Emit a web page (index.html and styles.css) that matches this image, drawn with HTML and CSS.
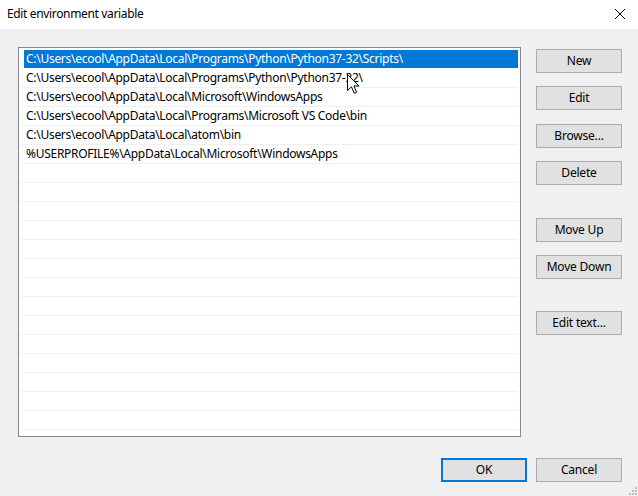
FILE: index.html
```html
<!DOCTYPE html>
<html>
<head>
<meta charset="utf-8">
<link rel="stylesheet" href="styles.css">
</head>
<body>
<div class="dialog">
  <div class="titlebar">
    <span class="title">Edit environment variable</span>
    <svg class="close" width="12" height="12" viewBox="0 0 12 12"><path d="M1 1 L11 11 M11 1 L1 11" stroke="#000" stroke-width="1" fill="none"/></svg>
  </div>
  <div class="main">
    <div class="list">
      <div class="row selected"><span>C:\Users\ecool\AppData\Local\Programs\Python\Python37-32\Scripts\</span></div>
      <div class="row"><span>C:\Users\ecool\AppData\Local\Programs\Python\Python37-32\</span></div>
      <div class="row"><span>C:\Users\ecool\AppData\Local\Microsoft\WindowsApps</span></div>
      <div class="row"><span>C:\Users\ecool\AppData\Local\Programs\Microsoft VS Code\bin</span></div>
      <div class="row"><span>C:\Users\ecool\AppData\Local\atom\bin</span></div>
      <div class="row"><span>%USERPROFILE%\AppData\Local\Microsoft\WindowsApps</span></div>
      <div class="row"></div><div class="row"></div><div class="row"></div><div class="row"></div>
      <div class="row"></div><div class="row"></div><div class="row"></div><div class="row"></div>
      <div class="row"></div><div class="row"></div><div class="row"></div><div class="row"></div>
      <div class="row"></div><div class="row"></div>
    </div>
    <div class="side">
      <button class="btn b-new">New</button>
      <button class="btn b-gap">Edit</button>
      <button class="btn b-gap2">Browse...</button>
      <button class="btn b-gap">Delete</button>
      <button class="btn b-group">Move Up</button>
      <button class="btn b-gap">Move Down</button>
      <button class="btn b-group2">Edit text...</button>
    </div>
  </div>
  <div class="footer">
    <button class="btn ok">OK</button>
    <button class="btn">Cancel</button>
  </div>
  <svg class="grip" width="10" height="10" viewBox="0 0 10 10">
    <g fill="#bcbcbc">
      <rect x="7" y="1" width="2" height="2"/>
      <rect x="4" y="4" width="2" height="2"/><rect x="7" y="4" width="2" height="2"/>
      <rect x="1" y="7" width="2" height="2"/><rect x="4" y="7" width="2" height="2"/><rect x="7" y="7" width="2" height="2"/>
    </g>
  </svg>
  <svg class="cursor" width="13" height="21" viewBox="0 0 13 21">
    <path d="M0.5 0.5 L0.5 16.5 L4.5 12.8 L7.2 19.3 L9.6 18.3 L7 12 L12 12 Z" fill="#fff" stroke="#000" stroke-width="1" stroke-linejoin="miter"/>
  </svg>
</div>
</body>
</html>
```

FILE: styles.css
```css
html, body {
  margin: 0;
  padding: 0;
}
body {
  width: 638px;
  height: 496px;
  overflow: hidden;
  font-family: "Noto Sans", "Open Sans", sans-serif;
  font-size: 12px;
  color: #000;
}
.dialog {
  position: relative;
  width: 638px;
  height: 496px;
  background: #f0f0f0;
}
.titlebar {
  height: 29px;
  background: #fff;
  display: flex;
  align-items: center;
  justify-content: space-between;
  padding: 0 12px 0 7px;
  box-sizing: border-box;
}
.title {
  font-size: 12px;
  line-height: 16px;
  padding-bottom: 2px;
  letter-spacing: -0.35px;
}
.close {
  display: block;
  margin-top: -2px;
}
.main {
  display: flex;
  padding: 18px 0 0 18px;
}
.list {
  width: 503px;
  height: 390px;
  box-sizing: border-box;
  border: 1px solid #828790;
  background: #fff;
  padding: 2px 1px 0 1px;
  overflow: hidden;
}
.row {
  height: 18px;
  border-bottom: 1px solid #f0f0f0;
  margin-left: 1px;
  margin-right: 1px;
  display: flex;
  align-items: center;
  white-space: nowrap;
  letter-spacing: -0.28px;
}
.row span {
  padding-left: 5px;
  line-height: 18px;
}
.row.selected {
  background: #0078d7;
  color: #fff;
  margin-left: 4px;
  border-bottom-color: #fff;
}
.row.selected span {
  padding-left: 2px;
}
.side {
  display: flex;
  flex-direction: column;
  margin-left: 15px;
  padding-top: 2px;
}
.btn {
  width: 86px;
  height: 24px;
  box-sizing: border-box;
  background: #e1e1e1;
  border: 1px solid #adadad;
  font-family: inherit;
  font-size: 12px;
  color: #000;
  padding: 0;
  margin: 0;
  line-height: 20px;
  letter-spacing: -0.2px;
}
.b-gap { margin-top: 13px; }
.b-gap2 { margin-top: 14px; }
.b-group { margin-top: 33px; }
.b-group2 { margin-top: 32px; }
.footer {
  display: flex;
  justify-content: flex-end;
  gap: 9px;
  padding: 21px 16px 0 0;
}
.btn.ok {
  border: 2px solid #0078d7;
}
.grip {
  position: absolute;
  right: 0;
  bottom: 0;
}
.cursor {
  position: absolute;
  left: 347px;
  top: 74px;
}
```
